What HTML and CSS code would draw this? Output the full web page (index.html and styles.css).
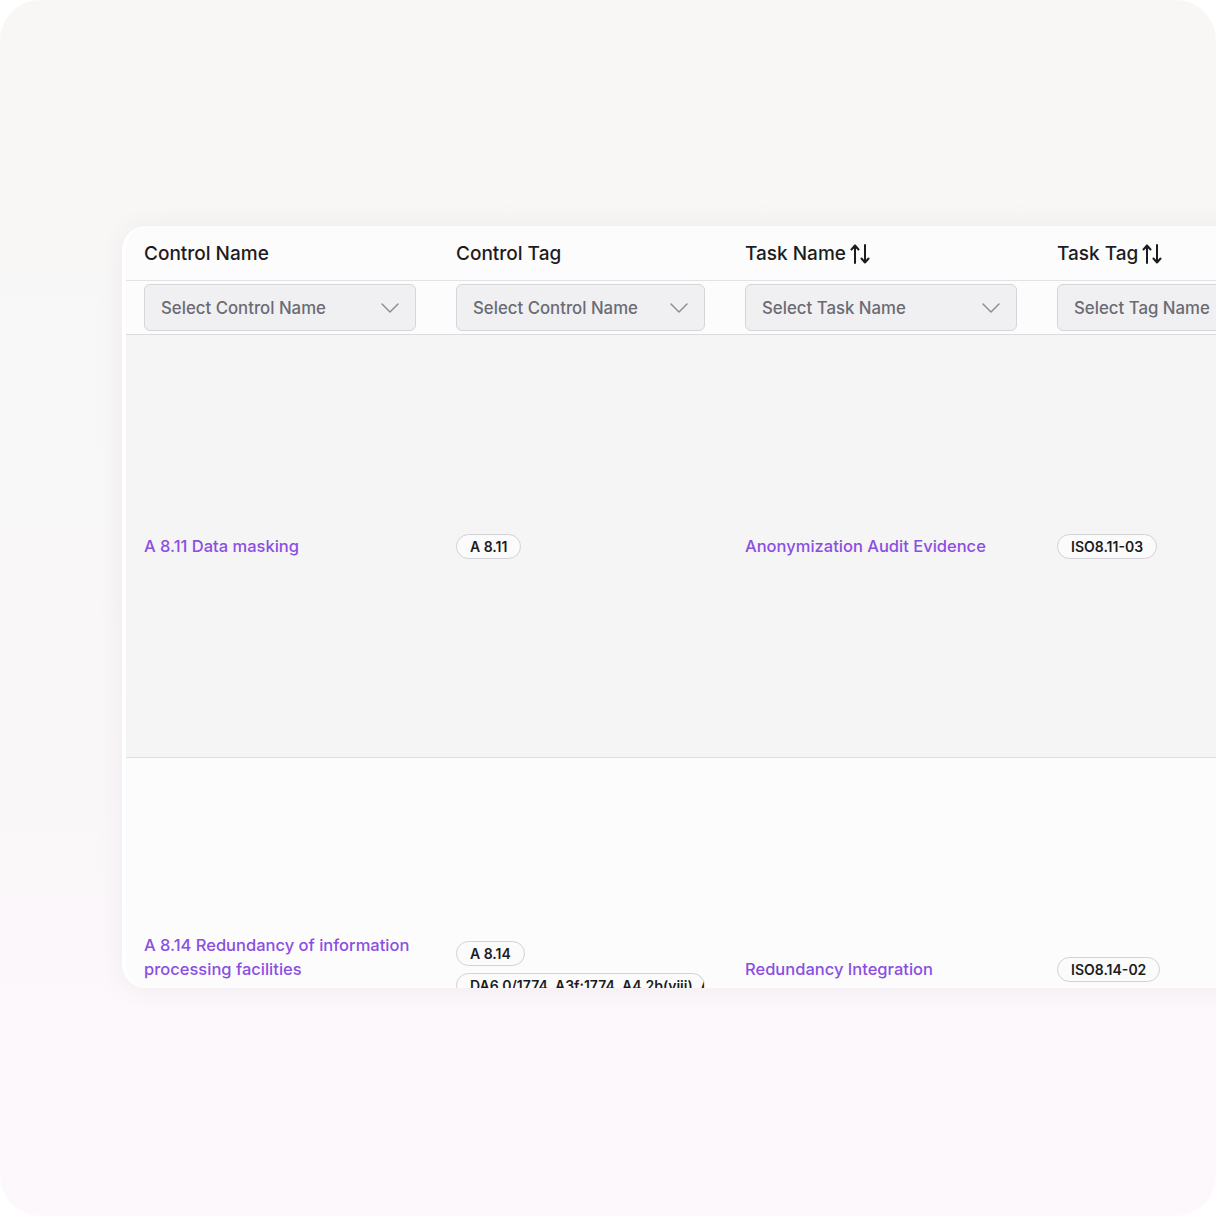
FILE: index.html
```html
<!DOCTYPE html>
<html lang="en">
<head>
<meta charset="UTF-8">
<meta name="viewport" content="width=device-width, initial-scale=1.0">
<title>Controls and Tasks</title>
<link rel="stylesheet" href="styles.css">
</head>
<body>
<div class="frame">
  <div class="card">
    <table class="grid">
      <colgroup>
        <col class="col-control">
        <col class="col-ctag">
        <col class="col-task">
        <col class="col-ttag">
      </colgroup>
      <thead>
        <tr class="head-row">
          <th>Control Name</th>
          <th>Control Tag</th>
          <th>
            <span class="sortable">Task Name
              <svg class="sort-icon" width="22" height="22" viewBox="0 0 22 22" fill="none" stroke="currentColor" stroke-width="2" stroke-linecap="round" stroke-linejoin="round">
                <path d="M6 20V2.5M2.5 6.5L6 2.5l3.5 4"/>
                <path d="M16 2v17.5M12.5 15.5l3.5 4 3.5-4"/>
              </svg>
            </span>
          </th>
          <th>
            <span class="sortable">Task Tag
              <svg class="sort-icon" width="22" height="22" viewBox="0 0 22 22" fill="none" stroke="currentColor" stroke-width="2" stroke-linecap="round" stroke-linejoin="round">
                <path d="M6 20V2.5M2.5 6.5L6 2.5l3.5 4"/>
                <path d="M16 2v17.5M12.5 15.5l3.5 4 3.5-4"/>
              </svg>
            </span>
          </th>
        </tr>
        <tr class="filter-row">
          <td>
            <div class="select">
              <span>Select Control Name</span>
              <svg width="18" height="10" viewBox="0 0 18 10" fill="none" stroke="currentColor" stroke-width="1.5" stroke-linecap="round" stroke-linejoin="round"><path d="M1 1l8 8 8-8"/></svg>
            </div>
          </td>
          <td>
            <div class="select">
              <span>Select Control Name</span>
              <svg width="18" height="10" viewBox="0 0 18 10" fill="none" stroke="currentColor" stroke-width="1.5" stroke-linecap="round" stroke-linejoin="round"><path d="M1 1l8 8 8-8"/></svg>
            </div>
          </td>
          <td>
            <div class="select">
              <span>Select Task Name</span>
              <svg width="18" height="10" viewBox="0 0 18 10" fill="none" stroke="currentColor" stroke-width="1.5" stroke-linecap="round" stroke-linejoin="round"><path d="M1 1l8 8 8-8"/></svg>
            </div>
          </td>
          <td>
            <div class="select">
              <span>Select Tag Name</span>
              <svg width="18" height="10" viewBox="0 0 18 10" fill="none" stroke="currentColor" stroke-width="1.5" stroke-linecap="round" stroke-linejoin="round"><path d="M1 1l8 8 8-8"/></svg>
            </div>
          </td>
        </tr>
      </thead>
      <tbody>
        <tr class="row row-shaded">
          <td><a class="link" href="#">A 8.11 Data masking</a></td>
          <td><span class="pill">A 8.11</span></td>
          <td><a class="link" href="#">Anonymization Audit Evidence</a></td>
          <td><span class="pill">ISO8.11-03</span></td>
        </tr>
        <tr class="row">
          <td><a class="link link-raised" href="#">A 8.14 Redundancy of information processing facilities</a></td>
          <td>
            <div class="pill-stack">
              <span class="pill">A 8.14</span>
              <span class="pill pill-wide">DA6.0/1774, A3f:1774, A4.2b(viii), A4.2c</span>
            </div>
          </td>
          <td><a class="link" href="#">Redundancy Integration</a></td>
          <td><span class="pill">ISO8.14-02</span></td>
        </tr>
      </tbody>
    </table>
  </div>
</div>
</body>
</html>
```

FILE: styles.css
```css
body {
  margin: 0;
  background-color: #ffffff;
  font-family: Inter, "Noto Sans", sans-serif;
  color: #1c1c1e;
}

.frame {
  width: 1216px;
  height: 1216px;
  border-radius: 40px;
  overflow: hidden;
  background: linear-gradient(180deg, #f8f7f6 0%, #f9f7f8 50%, #fdf8fc 100%);
  padding: 226px 0 0 122px;
  box-sizing: border-box;
}

.card {
  width: 1400px;
  height: 762px;
  overflow: hidden;
  background-color: #fcfcfc;
  border-left: 4px solid #ffffff;
  border-radius: 24px 0 0 24px;
  box-shadow: 0 0 28px rgba(60, 40, 60, 0.06);
  box-sizing: border-box;
}

.grid {
  border-collapse: separate;
  border-spacing: 0;
  table-layout: fixed;
  width: 1300px;
}

.col-control { width: 310px; }
.col-ctag { width: 289px; }
.col-task { width: 312px; }
.col-ttag { width: 389px; }

th, td {
  padding: 0 20px;
  text-align: left;
}

th:first-child, td:first-child {
  padding-left: 18px;
}

.head-row th {
  height: 55px;
  padding-top: 1px;
  font-size: 19px;
  font-weight: 500;
  color: #1c1c1e;
  border-bottom: 1px solid #e2e2e4;
  box-sizing: border-box;
}

.sortable {
  display: inline-flex;
  align-items: center;
  gap: 3px;
}

.sort-icon {
  color: #1c1c1e;
}

.filter-row td {
  height: 54px;
  padding-top: 3px;
  padding-bottom: 3px;
  border-bottom: 1px solid #dcdcde;
  box-sizing: border-box;
}

.select {
  display: flex;
  justify-content: space-between;
  align-items: center;
  height: 47px;
  padding: 0 16px;
  background-color: #f0f0f2;
  border: 1px solid #d6d6da;
  border-radius: 6px;
  box-sizing: border-box;
  color: #6b6b73;
  font-size: 16.8px;
  font-weight: 500;
  white-space: nowrap;
  overflow: hidden;
}

.select svg {
  color: #8e8e94;
  flex-shrink: 0;
}

.row td {
  height: 423px;
  vertical-align: middle;
  border-bottom: 1px solid #dedee0;
  box-sizing: border-box;
}

.row-shaded td {
  background-color: #f5f5f5;
}

.link {
  color: #8a4fe2;
  font-size: 16.5px;
  font-weight: 500;
  line-height: 24px;
  text-decoration: none;
}

.link-raised {
  display: block;
  padding-bottom: 24px;
}

.pill-stack {
  display: flex;
  flex-direction: column;
  align-items: flex-start;
  gap: 7px;
}

.pill {
  display: inline-block;
  padding: 0 13px;
  height: 25px;
  line-height: 23px;
  border: 1px solid #d2d2d6;
  border-radius: 999px;
  background-color: #fbfbfb;
  font-size: 14px;
  font-weight: 600;
  color: #1c1c1e;
  box-sizing: border-box;
  white-space: nowrap;
}

.pill-wide {
  max-width: 100%;
  overflow: hidden;
}
```
